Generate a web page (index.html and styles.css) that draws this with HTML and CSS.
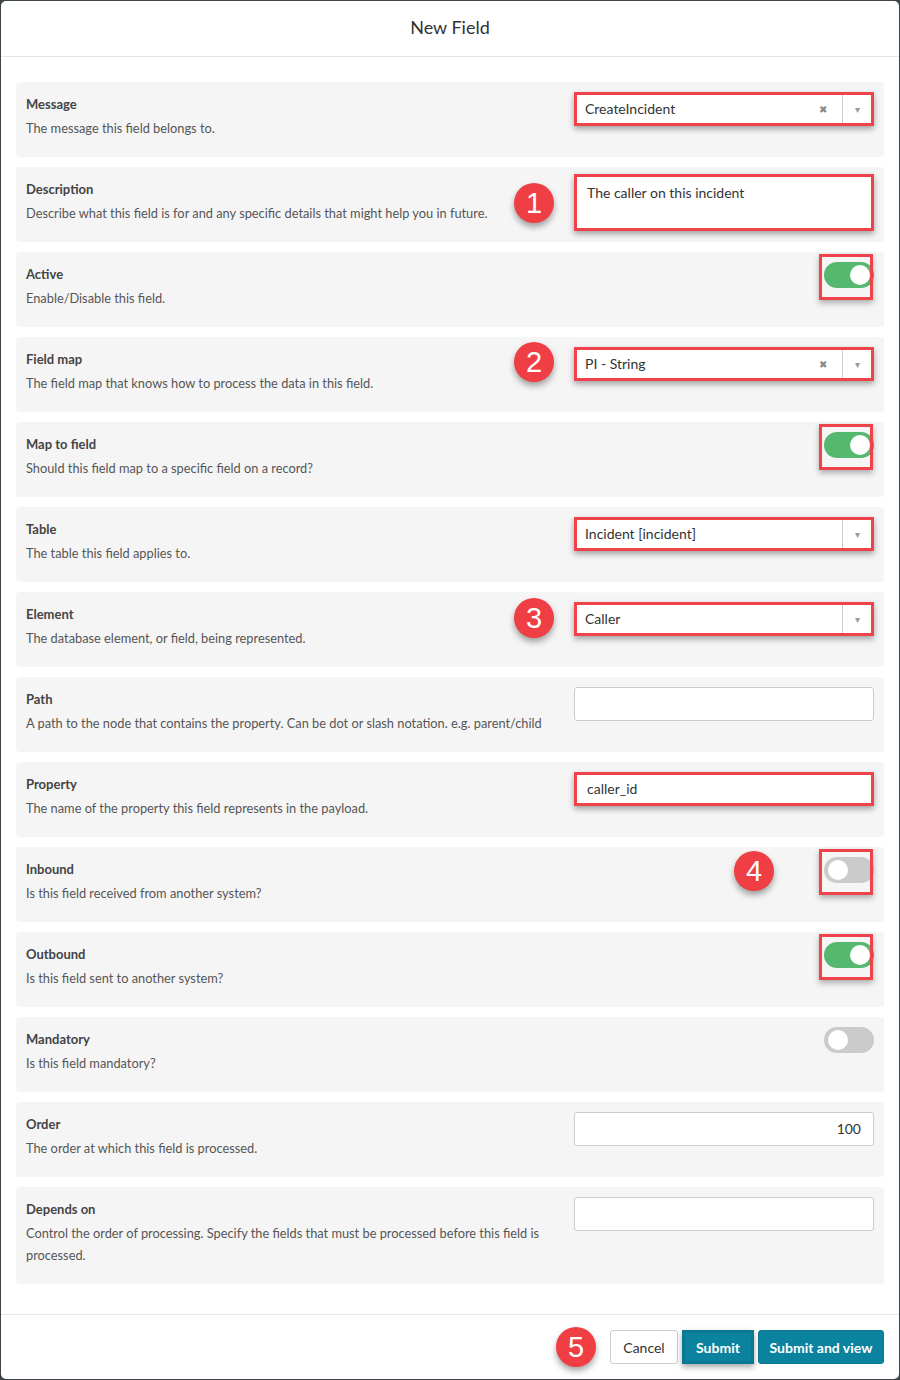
FILE: index.html
```html
<!DOCTYPE html>
<html lang="en">
<head>
  <meta charset="UTF-8" />
  <meta name="viewport" content="width=device-width, initial-scale=1.0">
  <title>New Field</title>
  <link rel="stylesheet" href="styles.css">
</head>
<body>
  <div class="modal">
    <div class="modal-header">New Field</div>

    <div class="modal-body">
      <div class="row">
        <div class="info">
          <div class="label">Message</div>
          <div class="desc">The message this field belongs to.</div>
        </div>
        <div class="control">
          <div class="select mark">
            <span class="value">CreateIncident</span>
            <span class="clear">&#x2716;</span>
            <span class="caret">&#9662;</span>
          </div>
        </div>
      </div>

      <div class="row">
        <div class="info">
          <div class="label">Description</div>
          <div class="desc">Describe what this field is for and any specific details that might help you in future.</div>
        </div>
        <div class="control">
          <div class="textarea mark">The caller on this incident</div>
        </div>
        <div class="badge b1">1</div>
      </div>

      <div class="row">
        <div class="info">
          <div class="label">Active</div>
          <div class="desc">Enable/Disable this field.</div>
        </div>
        <div class="control">
          <div class="toggle on mark-toggle"><span class="knob"></span></div>
        </div>
      </div>

      <div class="row">
        <div class="info">
          <div class="label">Field map</div>
          <div class="desc">The field map that knows how to process the data in this field.</div>
        </div>
        <div class="control">
          <div class="select mark">
            <span class="value">PI - String</span>
            <span class="clear">&#x2716;</span>
            <span class="caret">&#9662;</span>
          </div>
        </div>
        <div class="badge b2">2</div>
      </div>

      <div class="row">
        <div class="info">
          <div class="label">Map to field</div>
          <div class="desc">Should this field map to a specific field on a record?</div>
        </div>
        <div class="control">
          <div class="toggle on mark-toggle"><span class="knob"></span></div>
        </div>
      </div>

      <div class="row">
        <div class="info">
          <div class="label">Table</div>
          <div class="desc">The table this field applies to.</div>
        </div>
        <div class="control">
          <div class="select mark">
            <span class="value">Incident [incident]</span>
            <span class="caret">&#9662;</span>
          </div>
        </div>
      </div>

      <div class="row">
        <div class="info">
          <div class="label">Element</div>
          <div class="desc">The database element, or field, being represented.</div>
        </div>
        <div class="control">
          <div class="select mark">
            <span class="value">Caller</span>
            <span class="caret">&#9662;</span>
          </div>
        </div>
        <div class="badge b3">3</div>
      </div>

      <div class="row">
        <div class="info">
          <div class="label">Path</div>
          <div class="desc">A path to the node that contains the property. Can be dot or slash notation. e.g. parent/child</div>
        </div>
        <div class="control">
          <div class="input"></div>
        </div>
      </div>

      <div class="row">
        <div class="info">
          <div class="label">Property</div>
          <div class="desc">The name of the property this field represents in the payload.</div>
        </div>
        <div class="control">
          <div class="input mark">caller_id</div>
        </div>
      </div>

      <div class="row">
        <div class="info">
          <div class="label">Inbound</div>
          <div class="desc">Is this field received from another system?</div>
        </div>
        <div class="control">
          <div class="toggle mark-toggle"><span class="knob"></span></div>
        </div>
        <div class="badge b4">4</div>
      </div>

      <div class="row">
        <div class="info">
          <div class="label">Outbound</div>
          <div class="desc">Is this field sent to another system?</div>
        </div>
        <div class="control">
          <div class="toggle on mark-toggle"><span class="knob"></span></div>
        </div>
      </div>

      <div class="row">
        <div class="info">
          <div class="label">Mandatory</div>
          <div class="desc">Is this field mandatory?</div>
        </div>
        <div class="control">
          <div class="toggle"><span class="knob"></span></div>
        </div>
      </div>

      <div class="row">
        <div class="info">
          <div class="label">Order</div>
          <div class="desc">The order at which this field is processed.</div>
        </div>
        <div class="control">
          <div class="input number">100</div>
        </div>
      </div>

      <div class="row">
        <div class="info">
          <div class="label">Depends on</div>
          <div class="desc">Control the order of processing. Specify the fields that must be processed before this field is processed.</div>
        </div>
        <div class="control">
          <div class="input"></div>
        </div>
      </div>
    </div>

    <div class="modal-footer">
      <div class="badge b5">5</div>
      <button class="btn cancel">Cancel</button>
      <button class="btn primary mark-btn">Submit</button>
      <button class="btn primary wide">Submit and view</button>
    </div>
  </div>
</body>
</html>
```

FILE: styles.css
```css
html {
  background: #3d4547;
}
body {
  margin: 0;
  padding: 1px;
  font-family: Lato, "Open Sans", sans-serif;
  color: #333;
}
.modal {
  width: 898px;
  background: #fff;
  border-radius: 5px;
  overflow: hidden;
}
.modal-header {
  height: 55px;
  line-height: 53px;
  text-align: center;
  font-size: 18px;
  color: #333;
  border-bottom: 1px solid #e5e5e5;
}
.modal-body {
  padding: 25px 15px 30px 15px;
  display: flex;
  flex-direction: column;
  gap: 10px;
}
.row {
  position: relative;
  display: flex;
  align-items: flex-start;
  background: #f5f5f5;
  border-radius: 4px;
  padding: 13px 10px 18px 10px;
}
.info {
  width: 530px;
  margin-right: auto;
}
.label {
  font-size: 13px;
  line-height: 18px;
  font-weight: bold;
  color: #444;
}
.desc {
  margin-top: 4px;
  font-size: 12.8px;
  line-height: 22px;
  color: #555;
}
.control {
  width: 300px;
  height: 34px;
  margin-top: -3px;
  display: flex;
  justify-content: flex-end;
}

/* inputs */
.input,
.select,
.textarea {
  position: relative;
  flex-shrink: 0;
  box-sizing: border-box;
  width: 300px;
  height: 34px;
  background: #fff;
  border: 1px solid #ccc;
  border-radius: 3px;
  font-size: 14px;
  color: #333;
  line-height: 32px;
  padding: 0 12px;
}
.input.number {
  text-align: right;
}
.textarea {
  height: 57px;
  margin-top: -3px;
  line-height: 20px;
}
.select {
  display: flex;
  align-items: center;
  padding: 0 0 0 10px;
}
.select .value {
  flex: 1;
}
.select .clear {
  font-size: 10px;
  color: #888;
  width: 20px;
  text-align: center;
}
.select .caret {
  width: 28px;
  height: 100%;
  border-left: 1px solid #ccc;
  margin-left: 9px;
  text-align: center;
  font-size: 10px;
  color: #999;
}

/* toggles */
.toggle {
  position: relative;
  width: 50px;
  height: 26px;
  border-radius: 13px;
  background: #cbcbcb;
}
.toggle.on {
  background: #55b86f;
}
.knob {
  position: absolute;
  top: 3px;
  left: 4px;
  width: 20px;
  height: 20px;
  border-radius: 50%;
  background: #fff;
}
.toggle.on .knob {
  left: 26px;
}

/* annotation boxes */
.mark {
  border: 3px solid #f0424a;
  box-shadow: 0 3px 6px rgba(0, 0, 0, 0.35);
  border-radius: 0;
  line-height: 28px;
  padding-left: 10px;
}
.select.mark {
  padding-left: 8px;
}
.textarea.mark {
  line-height: 20px;
  padding-top: 6px;
}
.mark-toggle::after {
  content: "";
  position: absolute;
  top: -8px;
  left: -5px;
  right: 1px;
  bottom: -12px;
  border: 3px solid #f0424a;
  box-shadow: 0 3px 6px rgba(0, 0, 0, 0.3);
}
.badge {
  position: absolute;
  width: 40px;
  height: 40px;
  border-radius: 50%;
  background: #ef3e44;
  color: #fff;
  font-family: "Liberation Sans", Arial, sans-serif;
  font-size: 29px;
  line-height: 40px;
  text-align: center;
  box-shadow: 0 4px 6px rgba(0, 0, 0, 0.35);
}
.b1 { left: 498px; top: 16px; }
.b2 { left: 498px; top: 5px; }
.b3 { left: 498px; top: 6px; }
.b4 { left: 718px; top: 4px; }
.b5 { left: 555px; top: 12px; }

/* footer */
.modal-footer {
  position: relative;
  border-top: 1px solid #e5e5e5;
  padding: 15px 15px 15px 15px;
  display: flex;
  justify-content: flex-end;
  gap: 4px;
}
.btn {
  height: 34px;
  padding: 0;
  font-family: Lato, "Open Sans", sans-serif;
  font-size: 14px;
  border-radius: 3px;
  border: 1px solid #ccc;
  background: #fff;
  color: #333;
}
.btn.cancel {
  width: 68px;
}
.btn.primary {
  background: #0b829e;
  border-color: #0b7893;
  color: #fff;
  font-weight: bold;
}
.btn.wide {
  width: 126px;
}
.mark-btn {
  width: 72px;
  border: 3px solid #f0424a;
  border-radius: 0;
  background: #056e86;
  box-shadow: 0 3px 6px rgba(0, 0, 0, 0.35);
}
```
